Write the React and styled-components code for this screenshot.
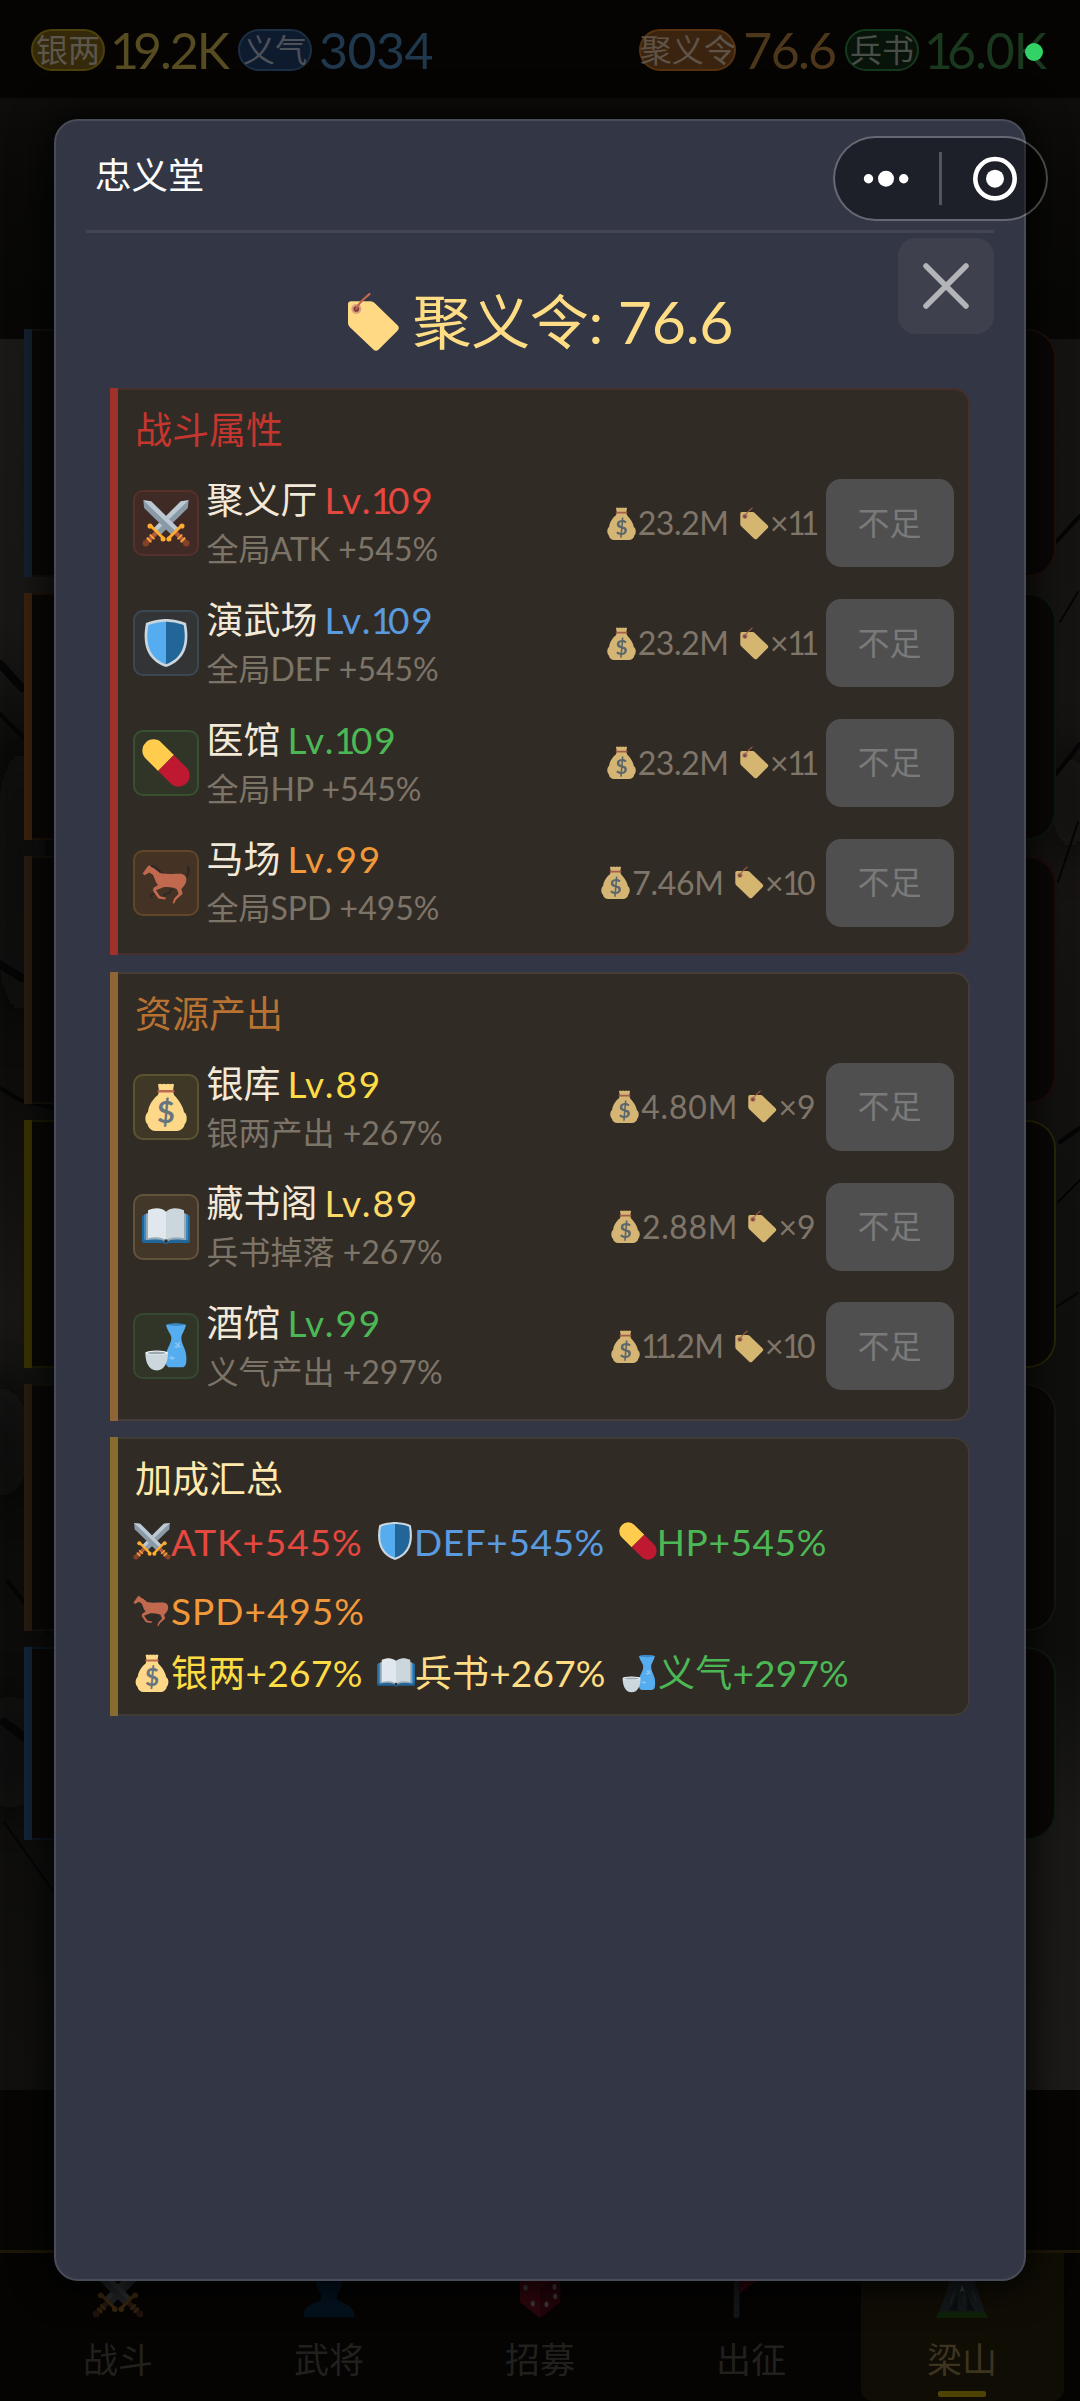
import React from "react";
import styled, { createGlobalStyle } from "styled-components";

const GlobalStyle = createGlobalStyle`
  * {
    box-sizing: border-box;
  }
  body {
    margin: 0;
    background: #060504;
    font-family: Lato, "Noto Sans CJK SC", sans-serif;
    color: #f3e9d8;
  }
`;

/* ---------- emoji drawings ---------- */

const Svg = styled.svg`
  display: block;
  flex: none;
  width: ${({ $size }) => $size}px;
  height: ${({ $size }) => $size}px;
  overflow: visible;
`;

const Sword = () => (
  <g>
    <path fill="#8A9AA7" d="M1 1 6.8 1.6 27 21.8 22 26.8 1.6 6.8z" />
    <path fill="#BCC9D3" d="M1 1 6.8 1.6 27 21.8 25 24z" />
    <path stroke="#B05A40" strokeWidth="3.4" d="M25.5 25.5 32 32" />
    <path stroke="#FFAC33" strokeWidth="1.2" d="M26.6 30.2 30.2 26.6M29 32.4 32.4 29" />
    <path stroke="#FFAC33" strokeWidth="2.2" d="M20 29.5 29.5 20" />
    <circle cx="20.2" cy="30" r="1.9" fill="#FFAC33" />
    <circle cx="30" cy="20.2" r="1.9" fill="#FFAC33" />
    <circle cx="33.2" cy="33.2" r="2.4" fill="#85402A" />
  </g>
);

const drawings = {
  swords: (
    <>
      <g transform="matrix(-1 0 0 1 36 0)">
        <Sword />
      </g>
      <Sword />
    </>
  ),
  shield: (
    <>
      <path fill="#CCD6DD" d="M33 3c-7-3-15-3-15-3S10 0 3 3C0 18 3 31 18 36c15-5 18-18 15-33z" />
      <path fill="#55ACEE" d="M18 33.884C6.412 29.729 1.961 19.831 4.76 4.444 11.063 2.029 18 2 18 2z" />
      <path fill="#269" d="M31.24 4.444C25.028 2.06 18 2 18 2v31.884c11.589-4.155 16.04-14.053 13.24-29.44z" />
    </>
  ),
  pill: (
    <g transform="rotate(45 18 18)">
      <path fill="#FFCC4D" d="M18 9.6H4.8a8.4 8.4 0 0 0 0 16.8H18z" />
      <path fill="#BE1931" d="M18 9.6h13.2a8.4 8.4 0 0 1 0 16.8H18z" />
    </g>
  ),
  horse: (
    <>
      <path fill="#2f2824" d="M33 12c2.5-2 -1-4.5 1.5-7.5 2.2 2.5 1.8 7.5-1.2 10z" />
      <path fill="none" stroke="#2f2824" strokeWidth="1.3" d="M10 25.5 6.8 26.8 7.5 29.5M22.5 21.5 20.5 25.5 15.5 27.5" />
      <path
        fill="#C1694F"
        d="M.5 10.8 4.5 5.2 6.2 4.6 7 5.8C10 7 12 9.5 14 10.5c4 1.3 10 .3 14 .5 3.5 0 5.5 2 5.3 5-.3 3-2.3 5-3.8 6.5l1 3.5-5 4.5-1.5 3-1-.5 1.2-3.5 3.3-3.5-1.5-3.5c-3-1.5-7-1.5-9.5-1.5l-6 2.5 3 4.5 4.5 1-.5 1.3-5.2-.7-4-5.6.2-2.2 3.5-2.3c-2-2-2.5-5.5-3.8-7.7L5.5 10.2 2 12.2z"
      />
      <path fill="#2f2824" d="M6.5 4.5c3.5-.5 6.5 3 9 6.2l-2-.2c-2-1.5-4-4-7-4.7z" />
    </>
  ),
  bag: (
    <>
      <path
        fill="#FDD888"
        d="M12 1q1.5-1 3 0 1.5-1 3 0 1.5-1 3 0 1.5-1 3 0l-.8 5L24 9c4 4 7 9 7.5 13 2.5 1 2.8 7 .5 9-.5 3-3 5-6 5H10c-3 0-5.2-2-5.8-5-2.2-2-2.4-7 .3-9.5C5 17 8 12 12 9l.8-3z"
      />
      <path fill="#BF6952" d="M12 5.2h12q.8 1 0 2H12q-.8-1 0-2z" />
      <text x="18" y="30" fill="#67757F" fontSize="23" fontWeight="700" textAnchor="middle">
        $
      </text>
    </>
  ),
  book: (
    <>
      <path fill="#269" d="M1.5 9h33q1.5 0 1.5 1.5v18q0 1.5-1.5 1.5H20q-2 1.5-4 0H1.5Q0 30 0 28.5v-18Q0 9 1.5 9z" />
      <path fill="#3B88C3" d="M1.5 8.5h33v19h-33z" />
      <path fill="#99AAB5" d="M3 8q8-4 15 0 7-4 15 0v20q-10-2-14 1h-2q-4-3-14-1z" />
      <path fill="#E1E8ED" d="M4.5 5.5C9 3.5 14 3 18 6.5V28c-4-3-9-2.5-13.5-1.5z" />
      <path fill="#CCD6DD" d="M31.5 5.5C27 3.5 22 3 18 6.5V28c4-3 9-2.5 13.5-1.5z" />
      <circle cx="18" cy="28.5" r="1.3" fill="#292F33" />
    </>
  ),
  sake: (
    <>
      <path
        fill="#55ACEE"
        d="M18 2q7.5-1.5 15 0c-1 5-3.5 7-3.5 10 0 5 3.8 8 3.8 15 0 4-.3 7-3.3 7h-9c-3 0-3.2-3-3.2-7C17.8 20 22 17 22 12c0-3-3-5-4-10z"
      />
      <ellipse cx="25.5" cy="2" rx="6.6" ry="1" fill="#3B88C3" />
      <path stroke="#8ec8f2" strokeWidth="1" d="M25 15.5l3.5 3M28.5 15l-3 4.5M24.5 18.5h4.5M20.5 27h4M22 25.5l1 3" />
      <path fill="#CCD6DD" d="M2.5 23h17c0 7-2.5 13.3-8.5 13.3S2.5 30 2.5 23z" />
      <ellipse cx="11" cy="23" rx="8.5" ry="1.6" fill="#F5F8FA" />
      <ellipse cx="11" cy="23.2" rx="6.8" ry="1" fill="#99AAB5" />
    </>
  ),
  tag: (
    <>
      <path fill="#FFD983" d="M5.5 5.5H17q1.4 0 2.4 1L33.3 20q1.6 1.6 0 3.2L22 34.5q-1.6 1.5-3.2 0L4.6 21q-1-1-1-2.4V7.4q0-1.9 1.9-1.9z" />
      <circle cx="8.6" cy="10.2" r="3" fill="#D99E82" />
      <circle cx="8.6" cy="10.2" r="1.7" fill="#7A3B34" />
      <path fill="none" stroke="#C1694F" strokeWidth="1.3" strokeLinecap="round" d="M8.6 10.2C10 6 13 4.5 16.5 1.2" />
    </>
  ),
  person: (
    <path fill="#04111d" d="M18 1c6 0 9 4 9 9.5 0 4-1.5 6.5-3.5 9v3c0 3 12 3 12 11.5v1.5H.5V34c0-8.5 12-8.5 12-11.5v-3C10.5 17 9 14.5 9 10.5 9 5 12 1 18 1z" />
  ),
  dice: (
    <>
      <path fill="#2c060c" d="M4 8 18 2l14 6v17L18 36 4 25z" />
      <path fill="#22040a" d="M18 15 32 8v17L18 36z" />
      <g fill="#3c3536">
        <ellipse cx="18" cy="9" rx="2.8" ry="1.5" />
        <ellipse cx="8" cy="15" rx="1.5" ry="2" />
        <ellipse cx="13" cy="26" rx="1.5" ry="2" />
        <ellipse cx="22.5" cy="26.5" rx="1.4" ry="2" />
        <ellipse cx="28" cy="14.5" rx="1.4" ry="2" />
        <ellipse cx="28.5" cy="21" rx="1.4" ry="2" />
      </g>
    </>
  ),
  flag: (
    <>
      <path fill="#14171a" d="M6 0h4v35.5q-2 1-4 0z" />
      <path fill="#2a050b" d="M10 1l22 2-7 5-15 11z" />
    </>
  ),
  mountain: (
    <>
      <path fill="#14181a" d="M18 0c5 0 8 6 10 15l6 17H2l6-17C10 6 13 0 18 0z" />
      <path fill="#0b0e10" d="M15 20l-3 6-3 5h6zM22 18l1 7 4 6h-6z" />
      <path fill="#3a3e40" d="M18 13l2 5-2-1-1.5 1.5z" />
      <path fill="none" stroke="#202426" d="M13 17l-3 9M19 20l1 5M25 17l3 8" />
      <path fill="#0e2108" d="M2 31.5h32l2 4.5H0z" />
    </>
  ),
};

const Emoji = ({ name, size = 38 }) => (
  <Svg $size={size} viewBox="0 0 36 36" aria-hidden="true">
    {drawings[name]}
  </Svg>
);

/* text run with its own tracking, without the gap after the last letter */
const Run = styled.span`
  letter-spacing: ${({ $track }) => $track || 0}px;
  margin-right: ${({ $track }) => -($track || 0)}px;
`;

const Ones = styled.span`
  margin: 0 0.04em 0 -0.04em;
  letter-spacing: -0.16em;
`;

// the digit 1 is set narrower than the other figures
const tight = (text) =>
  String(text)
    .split(/(1+)/)
    .filter(Boolean)
    .map((part, i) => (part[0] === "1" ? <Ones key={i}>{part}</Ones> : part));

/* ---------- page behind the dialog ---------- */

const Page = styled.div`
  position: relative;
  width: 1080px;
  height: 2401px;
  overflow: hidden;
  display: flex;
  flex-direction: column;
  background: #080706;
`;

const Painting = styled.svg`
  position: absolute;
  left: 0;
  top: 339px;
  width: 1080px;
  height: 1751px;
`;

const TopBar = styled.header`
  flex: none;
  height: 98px;
  padding: 0 33px 0 31px;
  display: flex;
  align-items: flex-start;
  justify-content: space-between;
  background: #050402;
`;

const Purse = styled.div`
  display: flex;
  padding-top: 29px;
  gap: 8px;
`;

const Resource = styled.div`
  display: flex;
  align-items: center;
  gap: 7px;
  height: 42px;
  color: ${({ $color }) => $color};
  font-size: 50px;
  white-space: nowrap;
`;

const Pill = styled.span`
  height: 42px;
  line-height: 37px;
  width: ${({ $width }) => $width}px;
  border: 2px solid ${({ $border }) => $border};
  border-radius: 21px;
  background: ${({ $bg }) => $bg};
  color: ${({ $color }) => $color};
  font-size: 32px;
  display: flex;
  justify-content: center;
`;

const Haze = styled.div`
  flex: none;
  height: 224px;
  background: linear-gradient(#0e0d0b, #0a0908 40%, #070706);
`;

const TeamGrid = styled.div`
  position: relative;
  flex: 1;
  padding: 7px 24px 0;
  display: grid;
  grid-template-columns: 1fr 1fr;
  grid-template-rows: repeat(5, 247.5px) 193px;
  gap: 16.2px;
`;

/* square colour bar down the left side of a card */
const Barred = styled.div`
  position: relative;
  border: 2px solid ${({ $edge }) => $edge};
  border-left: 0;

  &::before {
    content: "";
    position: absolute;
    left: 0;
    top: -2px;
    bottom: -2px;
    width: 8px;
    background: ${({ $bar }) => $bar};
  }
`;

const TeamCard = styled(Barred)`
  border-radius: 0 28px 28px 0;
  background: #0a0807;
`;

const Shade = styled.div`
  position: relative;
  flex: none;
  height: 160px;
  background: #070605;
`;

const NavBar = styled.nav`
  position: relative;
  flex: none;
  height: 151px;
  padding: 0 16.5px;
  border-top: 3px solid #1d1707;
  background: #050403;
  display: flex;
  gap: 8px;
`;

const NavItem = styled.div`
  flex: 1;
  display: flex;
  flex-direction: column;
  align-items: center;
  padding-top: 13px;
  font-size: 35px;
  line-height: 42px;
  gap: 20px;
  color: ${({ $active }) => ($active ? "#3d3420" : "#22201d")};
  background: ${({ $active }) => ($active ? "#100d05" : "none")};
  border-radius: 0 0 12px 12px;
`;

const NavIcon = styled.span`
  flex: none;
  opacity: ${({ $dim }) => ($dim ? 0.2 : 1)};
`;

const NavMark = styled.i`
  flex: none;
  width: 48px;
  height: 6px;
  margin-top: -9px;
  border-radius: 2px;
  background: #4f4303;
`;

/* ---------- dialog ---------- */

const Overlay = styled.div`
  position: absolute;
  inset: 0;
  padding: 119px 54px 120px;
  display: flex;
`;

const Dialog = styled.section`
  position: relative;
  flex: 1;
  display: flex;
  flex-direction: column;
  padding: 0 30px;
  border: 2px solid #484b58;
  border-radius: 24px;
  background: #323645;
  box-shadow: 0 0 36px 6px rgba(0, 0, 0, 0.8);
`;

const DialogTitle = styled.h1`
  flex: none;
  margin: 0;
  height: 112px;
  padding: 0 9px;
  border-bottom: 3px solid #434553;
  font-size: 36.5px;
  font-weight: 400;
  line-height: 108px;
  color: #fdfdfd;
`;

const CloseButton = styled.button`
  position: absolute;
  right: 30px;
  top: 117px;
  width: 96px;
  height: 96px;
  padding: 0;
  border: 0;
  border-radius: 18px;
  background: #3e414d;
`;

const Tokens = styled.div`
  flex: none;
  height: 155px;
  padding: 22px 4px 0 0;
  display: flex;
  align-items: center;
  justify-content: center;
  gap: 10px;
  color: #ffdd84;
  font-size: 59px;
  line-height: 60px;
`;

const Cards = styled.div`
  display: flex;
  flex-direction: column;
  gap: 16.2px;
  padding: 0 24px;
`;

const Card = styled(Barred)`
  border-radius: 0 16px 16px 0;
  background: #312b26;
  padding: 14px 14.5px ${({ $bottom }) => $bottom || 21.5}px 23px;
`;

const CardTitle = styled.h2`
  margin: 0 0 ${({ $gap }) => $gap || 18}px 2px;
  font-size: 37px;
  font-weight: 400;
  line-height: 52px;
  color: ${({ $color }) => $color};
`;

const Rows = styled.div`
  display: flex;
  flex-direction: column;
  gap: 21.2px;
`;

const Row = styled.div`
  display: flex;
  align-items: center;
  height: 98.6px;
`;

const IconBox = styled.div`
  width: 66px;
  height: 66px;
  flex: none;
  display: flex;
  align-items: center;
  justify-content: center;
  border: 2px solid ${({ $border }) => $border};
  border-radius: 10px;
  background: ${({ $bg }) => $bg};
`;

const Info = styled.div`
  flex: 1;
  padding-left: 7.5px;
  white-space: nowrap;
`;

const Name = styled.div`
  font-size: 37px;
  line-height: 52px;
`;

const Level = styled(Run)`
  margin-left: 7px;
  color: ${({ $color }) => $color};
`;

const Desc = styled.div`
  font-size: 32px;
  line-height: 46.6px;
  color: #7d7468;
`;

const Cost = styled.div`
  display: flex;
  align-items: center;
  margin-right: 10px;
  font-size: 32px;
  line-height: 40px;
  color: #7f7669;
  white-space: nowrap;

  svg {
    opacity: 0.8;
  }
  svg:nth-of-type(2) {
    margin-left: 8px;
  }
`;

const Upgrade = styled.button`
  flex: none;
  width: 128px;
  height: 88px;
  padding: 0 0 5px;
  border: 0;
  border-radius: 15px;
  background: #4f4f4f;
  color: #7a7a7a;
  font: inherit;
  font-size: 32px;
`;

const SumLine = styled.div`
  display: flex;
  flex-wrap: wrap;
  column-gap: 14.5px;
  font-size: 37px;
  line-height: ${({ $line }) => $line}px;
`;

const Bonus = styled.span`
  display: flex;
  align-items: center;
  color: ${({ $color }) => $color};
  white-space: nowrap;
`;

/* ---------- mini program capsule ---------- */

const Capsule = styled.div`
  position: absolute;
  left: 833px;
  top: 136px;
  width: 215px;
  height: 85px;
  border: 2px solid rgba(255, 255, 255, 0.25);
  border-radius: 43px;
  background: rgba(0, 0, 0, 0.4);
  background-clip: padding-box;
`;

const LiveDot = styled.i`
  position: absolute;
  left: 1025px;
  top: 43px;
  width: 18px;
  height: 18px;
  border-radius: 50%;
  background: #32d267;
`;

const teamColors = [
  ["#13212f", "#11110f", "#13100e", "#1f1109"],
  ["#3b220e", "#1c120a", "#13100e", "#0e1a0f"],
  ["#291c10", "#16110c", "#13100e", "#200c0b"],
  ["#3a3300", "#1d1a04", "#13100e", "#2a2606"],
  ["#291c10", "#16110c", "#13100e", "#161615"],
  ["#13263a", "#0d1621", "#13100e", "#0f1d10"],
];

const tabs = [
  ["swords", "战斗"],
  ["person", "武将"],
  ["dice", "招募"],
  ["flag", "出征"],
  ["mountain", "梁山"],
];

const groups = [
  {
    title: "战斗属性",
    color: "#c5362f",
    bar: "#a0312a",
    edge: "#472f2c",
    rows: [
      { icon: "swords", name: "聚义厅", lv: 109, color: "#e5483f", bg: "#402a25", border: "#57302b", desc: "全局ATK +545%", silver: "23.2M", token: 11 },
      { icon: "shield", name: "演武场", lv: 109, color: "#5a9be0", bg: "#333436", border: "#3b4854", desc: "全局DEF +545%", silver: "23.2M", token: 11 },
      { icon: "pill", name: "医馆", lv: 109, color: "#4cb855", bg: "#313528", border: "#37502f", desc: "全局HP +545%", silver: "23.2M", token: 11 },
      { icon: "horse", name: "马场", lv: 99, color: "#f0983a", bg: "#443324", border: "#614728", desc: "全局SPD +495%", silver: "7.46M", token: 10 },
    ],
  },
  {
    title: "资源产出",
    color: "#b87333",
    bar: "#8f6536",
    edge: "#453c39",
    bottom: 23,
    rows: [
      { icon: "bag", name: "银库", lv: 89, color: "#fddc44", bg: "#3f3826", border: "#5c5330", desc: "银两产出 +267%", silver: "4.80M", token: 9 },
      { icon: "book", name: "藏书阁", lv: 89, color: "#fdd966", bg: "#43372a", border: "#62543a", desc: "兵书掉落 +267%", silver: "2.88M", token: 9 },
      { icon: "sake", name: "酒馆", lv: 99, color: "#4cb855", bg: "#313528", border: "#334a30", desc: "义气产出 +297%", silver: "11.2M", token: 10 },
    ],
  },
];

const silverTrack = { "23.2M": -0.4, "7.46M": -0.3, "4.80M": 0.8, "2.88M": 0.6, "11.2M": -0.5 };

const battleBonus = [
  ["swords", "ATK+545%", "#e5483f", 0.9],
  ["shield", "DEF+545%", "#5a9be0", 0.6],
  ["pill", "HP+545%", "#4cb855", 0.6],
  ["horse", "SPD+495%", "#f0983a", 1],
];

const yieldBonus = [
  ["bag", "银两+267%", "#fddc44", 0.3],
  ["book", "兵书+267%", "#ffdd84", 0.2],
  ["sake", "义气+297%", "#4cb855", 0.2],
];

function Backdrop() {
  return (
    <Painting viewBox="0 17 1080 1751" aria-hidden="true">
      <defs>
        <filter id="soft" x="-100%" y="-30%" width="300%" height="160%">
          <feGaussianBlur stdDeviation="20" />
        </filter>
        <linearGradient id="paper" x1="0" y1="0" x2="0" y2="1">
          <stop offset="0" stopColor="#1a1917" />
          <stop offset="0.17" stopColor="#181715" />
          <stop offset="0.24" stopColor="#0d0d0c" />
          <stop offset="0.44" stopColor="#0e0d0c" />
          <stop offset="0.56" stopColor="#181716" />
          <stop offset="0.66" stopColor="#0b0b0a" />
          <stop offset="1" stopColor="#11100f" />
        </linearGradient>
        <linearGradient id="paperRight" x1="0" y1="0" x2="0" y2="1">
          <stop offset="0" stopColor="#141311" />
          <stop offset="0.3" stopColor="#171412" />
          <stop offset="0.5" stopColor="#10100f" />
          <stop offset="0.75" stopColor="#0e0e0d" />
          <stop offset="0.85" stopColor="#1a1918" />
          <stop offset="1" stopColor="#1c1b1a" />
        </linearGradient>
      </defs>
      <rect width="540" height="1768" fill="url(#paper)" />
      <rect x="540" width="540" height="1768" fill="url(#paperRight)" />
      <g filter="url(#soft)" fill="#070707" opacity="0.6">
        <ellipse cx="20" cy="560" rx="26" ry="150" />
        <ellipse cx="0" cy="1120" rx="30" ry="60" />
        <ellipse cx="10" cy="1430" rx="36" ry="60" />
        <ellipse cx="1070" cy="480" rx="20" ry="60" />
      </g>
      <g fill="none" stroke="#050505" strokeLinecap="round">
        <path strokeWidth="8" d="M0 342 22 366M-4 640l26 16M4 1400l34 26" />
        <path strokeWidth="4" d="M0 392l24 24M0 766l20 12 34 8M8 1260l40 50M1056 220l24-26M1056 452l24-30M1060 820l20-14" />
        <path strokeWidth="2" d="M1058 560l20-60M1060 300l18-30M1058 880l22-22M1056 985l22-14M4 1500l50 70" />
      </g>
    </Painting>
  );
}

function BuildingRow({ row }) {
  return (
    <Row>
      <IconBox $bg={row.bg} $border={row.border}>
        <Emoji name={row.icon} size={48} />
      </IconBox>
      <Info>
        <Name>
          {row.name}
          <Level $color={row.color} $track={1.9}>
            Lv.{tight(row.lv)}
          </Level>
        </Name>
        <Desc>{row.desc}</Desc>
      </Info>
      <Cost>
        <Emoji name="bag" size={33} />
        <Run $track={silverTrack[row.silver]}>{tight(row.silver)}</Run>
        <Emoji name="tag" size={33} />
        <Run>×{tight(row.token)}</Run>
      </Cost>
      <Upgrade>不足</Upgrade>
    </Row>
  );
}

function Bonuses({ items, line }) {
  return (
    <SumLine $line={line}>
      {items.map(([icon, text, color, track]) => (
        <Bonus key={text} $color={color}>
          <Emoji name={icon} />
          <Run $track={track}>{text}</Run>
        </Bonus>
      ))}
    </SumLine>
  );
}

function App() {
  return (
    <Page>
      <GlobalStyle />
      <Backdrop />
      <TopBar>
        <Purse>
          <Resource $color="#574b22">
            <Pill $width={74} $bg="#35290b" $border="#4c400b" $color="#5d564b">
              银两
            </Pill>
            <Run $track={-2}>{tight("19.2K")}</Run>
          </Resource>
          <Resource $color="#20384d">
            <Pill $width={74} $bg="#0e1b2e" $border="#1b2f45" $color="#4c5058">
              义气
            </Pill>
            <Run $track={-0.5}>3034</Run>
          </Resource>
        </Purse>
        <Purse>
          <Resource $color="#4d371b">
            <Pill $width={97} $bg="#3b240f" $border="#563212" $color="#5f5347">
              聚义令
            </Pill>
            <Run $track={-1.7}>76.6</Run>
          </Resource>
          <Resource $color="#1a381d">
            <Pill $width={74} $bg="#08140a" $border="#143a1d" $color="#484d47">
              兵书
            </Pill>
            <Run $track={-1}>{tight("16.0K")}</Run>
          </Resource>
        </Purse>
      </TopBar>
      <Haze />
      <TeamGrid>
        {teamColors.map(([bar, edge, bar2, edge2], i) => (
          <React.Fragment key={i}>
            <TeamCard $bar={bar} $edge={edge} />
            <TeamCard $bar={bar2} $edge={edge2} />
          </React.Fragment>
        ))}
      </TeamGrid>
      <Shade />
      <NavBar>
        {tabs.map(([icon, label], i) => (
          <NavItem key={label} $active={i === 4}>
            <NavIcon $dim={icon === "swords"}>
              <Emoji name={icon} size={52} />
            </NavIcon>
            {label}
            {i === 4 && <NavMark />}
          </NavItem>
        ))}
      </NavBar>

      <Overlay>
        <Dialog>
          <DialogTitle>忠义堂</DialogTitle>
          <CloseButton aria-label="close">
            <svg width="96" height="96" viewBox="0 0 96 96">
              <path d="M28 28 68 68M68 28 28 68" stroke="#b3b4b7" strokeWidth="5.5" strokeLinecap="round" />
            </svg>
          </CloseButton>
          <Tokens>
            <Emoji name="tag" size={60} />
            <Run $track={-0.3}>聚义令: 76.6</Run>
          </Tokens>
          <Cards>
            {groups.map((group) => (
              <Card key={group.title} $bar={group.bar} $edge={group.edge} $bottom={group.bottom}>
                <CardTitle $color={group.color}>{group.title}</CardTitle>
                <Rows>
                  {group.rows.map((row) => (
                    <BuildingRow key={row.name} row={row} />
                  ))}
                </Rows>
              </Card>
            ))}
            <Card $bar="#876c30" $edge="#3f3b37" $bottom={13}>
              <CardTitle $color="#ffe9ad" $gap={2}>
                加成汇总
              </CardTitle>
              <Bonuses items={battleBonus} line={69} />
              <Bonuses items={yieldBonus} line={56} />
            </Card>
          </Cards>
        </Dialog>
      </Overlay>

      <Capsule>
        <svg width="211" height="81" viewBox="0 0 211 81">
          <g fill="#fff">
            <circle cx="33.5" cy="40.7" r="4.7" />
            <circle cx="51" cy="40.7" r="8" />
            <circle cx="68.7" cy="40.7" r="4.7" />
            <circle cx="160" cy="40.7" r="9" />
          </g>
          <path stroke="#54565f" strokeWidth="3" d="M105.5 14v53" />
          <circle cx="160" cy="40.7" r="19.7" fill="none" stroke="#fff" strokeWidth="4.6" />
        </svg>
      </Capsule>
      <LiveDot />
    </Page>
  );
}

export default App;
